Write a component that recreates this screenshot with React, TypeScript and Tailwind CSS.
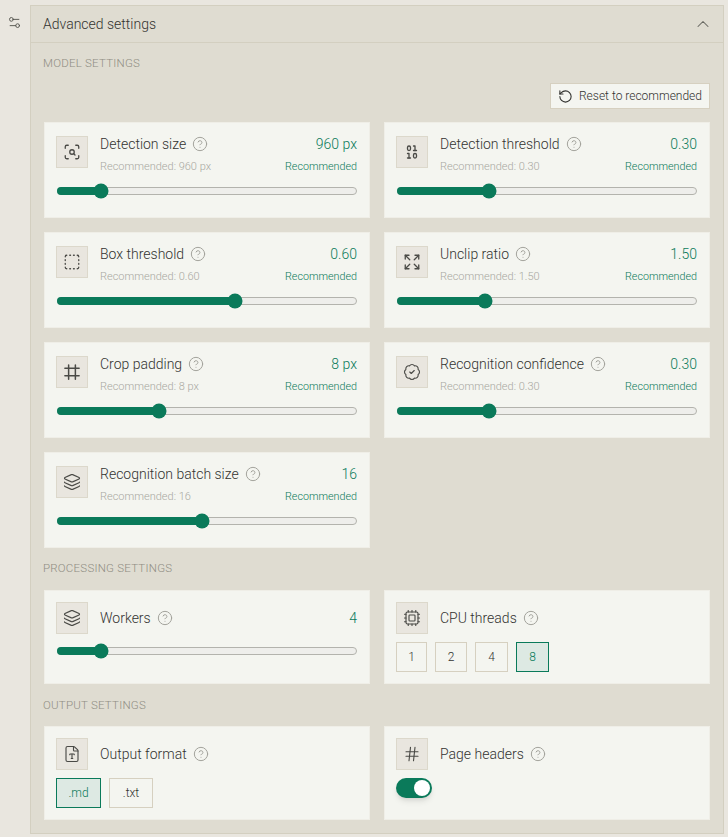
import React from "react";
import {
  BadgeCheck,
  Binary,
  ChevronUp,
  CircleHelp,
  Cpu,
  Expand,
  FileType,
  Hash,
  Layers,
  RotateCcw,
  ScanSearch,
  Settings2,
  SquareDashed,
} from "lucide-react";

const CropIcon = ({ size = 18 }: { size?: number }) => (
  <svg width={size} height={size} viewBox="0 0 24 24" fill="none" stroke="currentColor" strokeWidth="2" strokeLinecap="round">
    <path d="M7.5 2.5v19M16.5 2.5v19M2.5 7h19M2.5 17h19" />
  </svg>
);

const IconBox = ({ children }: { children: React.ReactNode }) => (
  <div className="w-8 h-8 shrink-0 flex items-center justify-center bg-[#e9e6df] border border-[#dcd8cb] text-[#4a4a46]">
    {children}
  </div>
);

const Help = () => <CircleHelp size={16} strokeWidth={1.5} className="text-[#a3a39c] shrink-0" />;

const Slider = ({ at }: { at: number }) => (
  <div className="relative h-2 ml-px rounded-full bg-[#eeeeeb] border border-[#b3b3ad]">
    <div className="absolute -left-px -top-px -bottom-px rounded-full bg-[#0a7a5a]" style={{ width: `${(at / 300) * 100}%` }} />
    <div
      className="absolute top-1/2 w-[15px] h-[15px] -translate-x-1/2 -translate-y-1/2 rounded-full bg-[#0a7a5a]"
      style={{ left: `${(at / 300) * 100}%` }}
    />
  </div>
);

const Card = ({ children, className = "" }: { children: React.ReactNode; className?: string }) => (
  <div className={`bg-[#f4f5f0] border border-[#efeee7] pl-[11px] pr-3 ${className}`}>{children}</div>
);

type SliderSetting = {
  title: string;
  value: string;
  hint: string;
  at: number;
  icon: React.ReactNode;
};

const SliderCard = ({ title, value, hint, at, icon }: SliderSetting) => (
  <Card className="h-[96px] pt-[13px]">
    <div className="flex gap-3">
      <IconBox>{icon}</IconBox>
      <div className="flex-1 min-w-0">
        <div className="flex items-center justify-between h-4">
          <div className="flex items-center gap-1.5">
            <span className="text-[14px] text-[#333330]">{title}</span>
            <Help />
          </div>
          <span className="text-[14px] text-[#0a7a5a]">{value}</span>
        </div>
        <div className="flex items-center justify-between h-4 mt-[7px] text-[11px]">
          <span className="text-[#a8a8a1]">{hint}</span>
          <span className="text-[#0a7a5a] text-[10.75px]">Recommended</span>
        </div>
      </div>
    </div>
    <div className="mt-3">
      <Slider at={at} />
    </div>
  </Card>
);

const CardHead = ({ title, icon, value }: { title: string; icon: React.ReactNode; value?: string }) => (
  <div className="flex items-center gap-3">
    <IconBox>{icon}</IconBox>
    <div className="flex-1 flex items-center justify-between">
      <div className="flex items-center gap-1.5">
        <span className="text-[14px] text-[#333330]">{title}</span>
        <Help />
      </div>
      {value && <span className="text-[14px] text-[#0a7a5a]">{value}</span>}
    </div>
  </div>
);

const Choice = ({ label, width, active }: { label: string; width: string; active?: boolean }) => (
  <button
    className={`h-[30px] ${width} flex items-center justify-center text-[12px] border ${
      active ? "bg-[#dde9e3] border-[#0a7a5a] text-[#0a7a5a]" : "border-[#d6d0c0] text-[#333330]"
    }`}
  >
    {label}
  </button>
);

const SectionLabel = ({ children, className = "" }: { children: React.ReactNode; className?: string }) => (
  <div className={`-ml-px text-[11.5px] leading-4 tracking-[0.02em] text-[#8f8d83] ${className}`}>{children}</div>
);

const modelSettings: SliderSetting[] = [
  { title: "Detection size", value: "960 px", hint: "Recommended: 960 px", at: 43, icon: <ScanSearch size={18} strokeWidth={1.75} /> },
  { title: "Detection threshold", value: "0.30", hint: "Recommended: 0.30", at: 92, icon: <Binary size={18} strokeWidth={1.75} /> },
  { title: "Box threshold", value: "0.60", hint: "Recommended: 0.60", at: 178, icon: <SquareDashed size={18} strokeWidth={1.75} /> },
  { title: "Unclip ratio", value: "1.50", hint: "Recommended: 1.50", at: 88, icon: <Expand size={18} strokeWidth={1.75} /> },
  { title: "Crop padding", value: "8 px", hint: "Recommended: 8 px", at: 102, icon: <CropIcon /> },
  { title: "Recognition confidence", value: "0.30", hint: "Recommended: 0.30", at: 92, icon: <BadgeCheck size={18} strokeWidth={1.5} /> },
  { title: "Recognition batch size", value: "16", hint: "Recommended: 16", at: 145, icon: <Layers size={18} strokeWidth={1.5} /> },
];

export default function App() {
  return (
    <div className="min-h-[837px] bg-[#e9e6df] font-['Roboto',sans-serif] font-light flex pt-[5px] pr-1">
      <div className="w-[30px] shrink-0 pt-[10px] pl-[7px] text-[#55554f]">
        <Settings2 size={15} strokeWidth={1.5} />
      </div>
      <div className="flex-1 h-[829px] bg-[#dfdcd1] border border-[#d3cfc0]">
        <div className="h-9 flex items-center justify-between pl-3 pr-[10px] border-b border-[#d3cfc0] box-content">
          <span className="text-[14px] text-[#333330]">Advanced settings</span>
          <ChevronUp size={20} strokeWidth={1.25} className="text-[#66665f]" />
        </div>
        <div className="px-[13px]">
          <SectionLabel className="mt-3">MODEL SETTINGS</SectionLabel>
          <div className="flex justify-end mt-[12px]">
            <button className="h-[26px] w-[160px] flex items-center justify-center gap-[6px] text-[12px] bg-[#f4f5f0] border border-[#d6d0c0] text-[#333330]">
              <RotateCcw size={15} strokeWidth={1.75} />
              Reset to recommended
            </button>
          </div>
          <div className="grid grid-cols-2 gap-[14px] mt-[13px]">
            {modelSettings.map((s) => (
              <SliderCard key={s.title} {...s} />
            ))}
          </div>
          <SectionLabel className="mt-3">PROCESSING SETTINGS</SectionLabel>
          <div className="grid grid-cols-2 gap-[14px] mt-[14px]">
            <Card className="pt-[11px] pb-[11px]">
              <CardHead title="Workers" value="4" icon={<Layers size={18} strokeWidth={1.5} />} />
              <div className="mt-[13px]">
                <Slider at={43} />
              </div>
            </Card>
            <Card className="pt-[11px] pb-[11px]">
              <CardHead title="CPU threads" icon={<Cpu size={18} strokeWidth={1.5} />} />
              <div className="flex gap-2 mt-2">
                <Choice label="1" width="w-[31px]" />
                <Choice label="2" width="w-8" />
                <Choice label="4" width="w-[33px]" />
                <Choice label="8" width="w-[33px]" active />
              </div>
            </Card>
          </div>
          <SectionLabel className="mt-[13px]">OUTPUT SETTINGS</SectionLabel>
          <div className="grid grid-cols-2 gap-[14px] mt-[13px]">
            <Card className="pt-[11px] pb-[11px]">
              <CardHead title="Output format" icon={<FileType size={18} strokeWidth={1.5} />} />
              <div className="flex gap-2 mt-2">
                <Choice label=".md" width="w-[45px]" active />
                <Choice label=".txt" width="w-11" />
              </div>
            </Card>
            <Card className="pt-[11px] pb-[11px]">
              <CardHead title="Page headers" icon={<Hash size={18} strokeWidth={1.5} />} />
              <div className="mt-2 w-9 h-5 rounded-full bg-[#0a7a5a] flex items-center justify-end pr-0.5 shadow-md">
                <div className="w-4 h-4 rounded-full bg-white" />
              </div>
            </Card>
          </div>
        </div>
      </div>
    </div>
  );
}
